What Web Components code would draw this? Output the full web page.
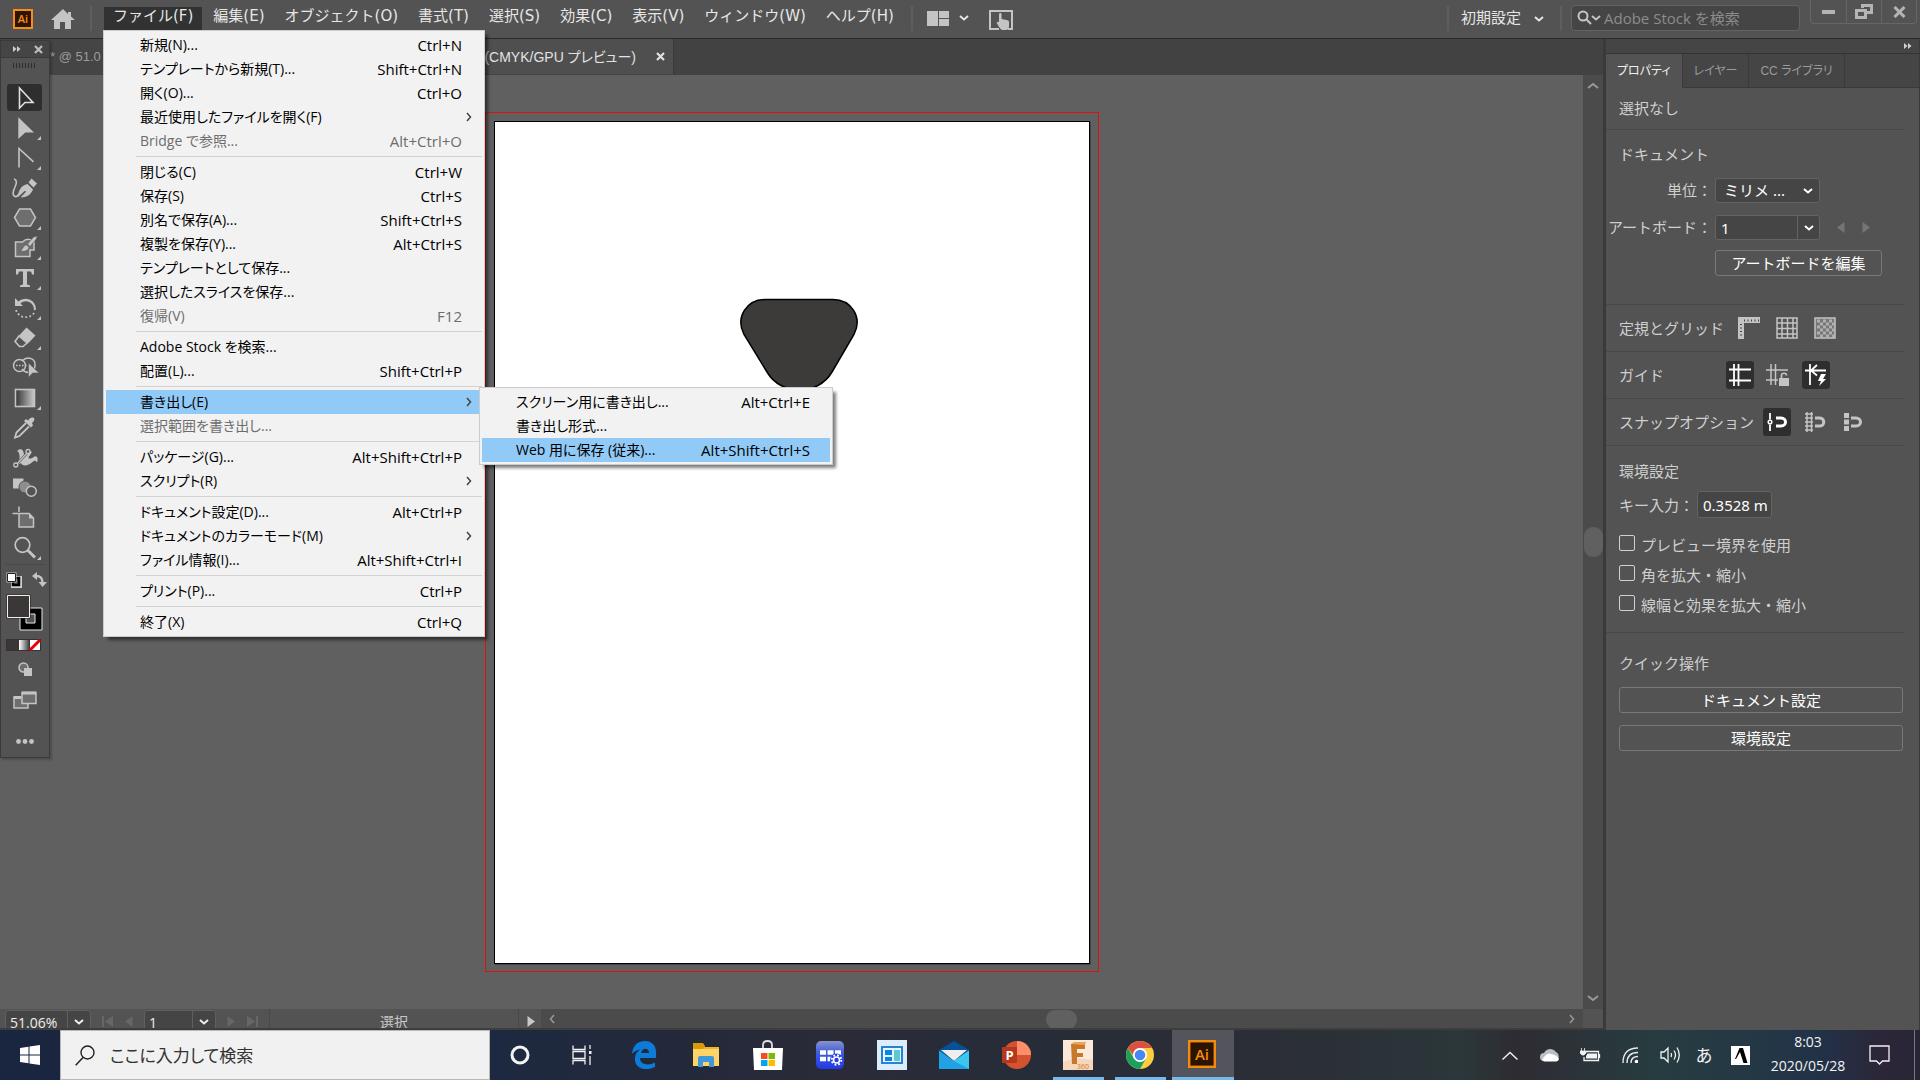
<!DOCTYPE html>
<html lang="ja">
<head>
<meta charset="utf-8">
<title>Illustrator</title>
<style>
  html, body { margin: 0; height: 100%; overflow: hidden; background: #535353; }
  body { font-family: "Open Sans", "Noto Sans CJK JP", sans-serif; font-size: 15px; line-height: 24px; color: #d6d6d6; }
</style>
</head>
<body>
<app-shell></app-shell>

<script>
const RESET = `
  *, *::before, *::after { box-sizing: border-box; }
  button, input, select { font: inherit; color: inherit; margin: 0; padding: 0; border: 0; background: none; border-radius: 0; appearance: none; outline: none; min-width: 0; }
  button { cursor: default; }
  svg { display: block; flex: none; }
`;
function define(name, css, html, setup) {
  const template = document.createElement('template');
  template.innerHTML = `<style>${RESET}${css}</style>${html}`;
  customElements.define(name, class extends HTMLElement {
    connectedCallback() {
      if (this.shadowRoot) return;
      this.attachShadow({ mode: 'open' }).appendChild(template.content.cloneNode(true));
      if (setup) setup(this.shadowRoot, this);
    }
  });
}

/* name: [width, height, svg body] */
const L = '#c4c4c4';
const ICONS = {
  'ai': [20, 20, `<rect x="1" y="1" width="18" height="18" fill="#2b1400" stroke="#f68b1f" stroke-width="2"/><text x="10" y="14" text-anchor="middle" font-family="Open Sans" font-weight="600" font-size="11" fill="#f68b1f">Ai</text>`],
  'home': [24, 20, `<path d="M12 0 0 11h3v9h6v-7h5v7h6v-9h4L20 7.500V3h-3v2z" fill="${L}"/>`],
  'arrange': [22, 15, `<path d="M0 0h11v15H0zM12 0h10v7H12zM12 8h10v7H12z" fill="${L}"/>`],
  'chev': [10, 6, `<path d="m1 1 4 3.500 4-3.500" fill="none" stroke="currentColor" stroke-width="2"/>`],
  'chev-up': [12, 7, `<path d="m1 6 5-4 5 4" fill="none" stroke="currentColor" stroke-width="2"/>`],
  'chev-down': [12, 7, `<path d="m1 1 5 4 5-4" fill="none" stroke="currentColor" stroke-width="2"/>`],
  'chev-left': [6, 10, `<path d="M5 1 1.500 5 5 9" fill="none" stroke="currentColor" stroke-width="1.500"/>`],
  'chev-right': [6, 10, `<path d="M1 1 4.500 5 1 9" fill="none" stroke="currentColor" stroke-width="1.500"/>`],
  'touch': [24, 20, `<path d="M10 19H1V1h22v18h-4" fill="none" stroke="${L}" stroke-width="2"/><path d="M10 4.500c0-2 2.600-2 2.600 0V9l6 1.300c1 .3 1.400 1 1.400 2V16c0 2-1 4-3 4h-3c-2 0-3.500-2-6-6.500-.8-1.600 1-2.400 2-1.300z" fill="${L}"/>`],
  'search-drop': [24, 16, `<circle cx="6" cy="6" r="4.500" fill="none" stroke="${L}" stroke-width="2"/><path d="m9 9 5 5M15 6l4 3.500L23 6" fill="none" stroke="${L}" stroke-width="2"/>`],
  'w-min': [13, 13, `<rect y="5" width="13" height="4" fill="#b4b4b4"/>`],
  'w-restore': [18, 15, `<path d="M1.500 6.500h9v7h-9zM7.500 4V1.500h9v7H12" fill="none" stroke="#b4b4b4" stroke-width="3"/>`],
  'w-close': [13, 12, `<path d="m1.500 1 10 10M11.500 1l-10 10" stroke="#b4b4b4" stroke-width="3"/>`],
  'x': [9, 9, `<path d="m1 1 7 7M8 1 1 8" stroke="currentColor" stroke-width="2.200"/>`],
  'dbl': [8, 6, `<path d="M0 0 3.500 3 0 6zM4 0l3.500 3L4 6z" fill="#d0d0d0"/>`],
  'grip': [24, 5, `<path d="M0 2.500h24" stroke="#2c2c2c" stroke-width="5" stroke-dasharray="1 2"/>`],

  't0': [36, 30, `<path d="M12.500 5v20l5.500-5.500h8z" fill="none" stroke="#e0e0e0" stroke-width="1.600"/>`],
  't1': [36, 30, `<path d="M11.300 4.300V26l7-6.500H27z" fill="${L}"/>`],
  't2': [36, 30, `<path d="M12 24.500V5.500l14.500 13.300" fill="none" stroke="${L}" stroke-width="1.600"/>`],
  't3': [36, 30, `<path d="M7 6c3 1 3 4 1 8s-3 8 0 9.500c2 .6 3-1 4-2.500" fill="none" stroke="${L}" stroke-width="1.600"/><path d="M10.500 24.500c1-7 3.500-12 10-13.500l5.500 5.500c-2 5-6 8-12.500 8l5.500-5.700-1-1z" fill="${L}"/><path d="m21.500 9.500 3-4 5.500 5-3.500 4z" fill="${L}"/>`],
  't4': [36, 30, `<path d="m7.500 14.500 5-8.500h11l5 8.500-5 8.500h-11z" fill="#6e6e6e" stroke="${L}" stroke-width="1.500"/>`],
  't5': [36, 30, `<path d="M8.500 9h7c4-4 9-3 11.500 0v8h-4v6.500H8.500z" fill="#6e6e6e" stroke="${L}" stroke-width="1.500"/><path d="m30.500 3-4 1-6 7 2.500 2.500 6-7zM19.500 12c-3 0-3 3-6 6 4 1 8 0 8.500-4z" fill="${L}" stroke="#535353" stroke-width=".6"/>`],
  't6': [36, 30, `<path d="M9 6h18v5.500h-2L24 8.500h-4v13l3 1V24H13v-1.500l3-1v-13h-4l-1 3H9z" fill="${L}"/>`],
  't7': [36, 30, `<path d="M8 5v8h8l-2.500-2.500c5-5 14-1.500 13.500 7l2-1c0-10-11-14-17.500-8z" fill="${L}"/><path d="M27 20c-4 6-15 6-18-3" fill="none" stroke="${L}" stroke-width="1.800" stroke-dasharray="1.800 2.300"/>`],
  't8': [36, 30, `<path d="m19.500 4.500 9 8-7.500 8-9-8z" fill="${L}"/><path d="m12 13-4 5.500 4.500 5h3.500l4-3.500z" fill="none" stroke="${L}" stroke-width="1.600"/>`],
  't9': [36, 30, `<path d="M15 8c6-6 14-2 13 5-1 8-9 8-13 3" fill="none" stroke="${L}" stroke-width="1.500"/><circle cx="12.500" cy="12.500" r="6" fill="none" stroke="${L}" stroke-width="1.500"/><path d="M9 12.500h12" stroke="${L}" stroke-width="1.500" stroke-dasharray="1.500 1.500"/><path d="M21.500 10v14.500l4-4.500H32z" fill="${L}" stroke="#535353" stroke-width=".6"/>`],
  't10': [36, 30, `<defs><linearGradient id="g"><stop stop-color="#333"/><stop offset="1" stop-color="#ccc"/></linearGradient></defs><rect x="8.500" y="6.500" width="19" height="17" fill="url(#g)" stroke="${L}" stroke-width="1.600"/>`],
  't11': [36, 30, `<path d="m19 10-9.500 9.500-1.500 5 4.500-1.500L22 13.500" fill="none" stroke="${L}" stroke-width="1.800"/><path d="m17 8 2-2 2 1.500C23 5 24 4 26 4.500s2 3-1 5.500l1 2.500-2 2z" fill="${L}"/>`],
  't12': [36, 30, `<path d="M10 8c4-4 7-1 7 4l1 2c3-3 5-7 6.500-5.500 1 1.500-3 4.500-3 6.500 1 1.500 4 0 6-1.500 3-1 4 3 2.500 6-1-2-2-2.500-4-1-5 5-11 5-12 1.500-1 1-3 1-4 .5 2-3 3-5 2.500-8C12 10 12 9 10 8z" fill="${L}"/><path d="m10 21 10-11" stroke="#535353" stroke-width="2.600"/><path d="m9 22 12-13" stroke="${L}" stroke-width="1.300"/><circle cx="8.800" cy="22" r="2" fill="#535353" stroke="${L}" stroke-width="1.300"/><circle cx="21" cy="8.500" r="2" fill="#535353" stroke="${L}" stroke-width="1.300"/>`],
  't13': [36, 30, `<path d="M6 5.500h10.500v10H6z" fill="${L}"/><circle cx="18" cy="14" r="6" fill="#8e8e8e" stroke="#535353"/><circle cx="24.300" cy="18.300" r="5" fill="#535353" stroke="${L}" stroke-width="1.500"/>`],
  't14': [36, 30, `<path d="M12 3.500V9M5.500 10.500H11" stroke="${L}" stroke-width="1.500"/><path d="M12 10.500h10l4.500 4.500v9H12z" fill="#6e6e6e" stroke="${L}" stroke-width="1.500"/><path d="M22 10v5.500h5z" fill="${L}"/>`],
  't15': [36, 30, `<circle cx="15.500" cy="12" r="7.300" fill="none" stroke="${L}" stroke-width="1.700"/><path d="m21 17.500 7 7" stroke="${L}" stroke-width="3"/>`],
  'default-fill': [16, 16, `<path d="M6.500 5.500h8v9h-8z" fill="none" stroke="#d0d0d0" stroke-width="3"/><path d="M7 6h6v7H7z" fill="none" stroke="#000" stroke-width="2.500"/><path d="M.5.500h10v10H.500z" fill="#d0d0d0"/><path d="M1.500 1.500h8v8h-8z" fill="#fff" stroke="#222"/>`],
  'swap': [15, 15, `<path d="M4 4c5 0 6.500 2 6.500 7" fill="none" stroke="${L}" stroke-width="2.500"/><path d="M5 0v8L0 4zM6.500 10H15l-4.500 5z" fill="${L}"/>`],
  'swatches': [37, 37, `<path d="M14 14h22v22H14z" fill="#000" stroke="#e8e8e8"/><path d="M20 20h9v9h-9z" fill="#535353" stroke="#e8e8e8"/><path d="M.5.500h24v24H.500z" fill="#222"/><path d="M1.500 1.500h22v22h-22z" fill="#3b3736" stroke="#f0f0f0"/>`],
  'modes': [35, 12, `<defs><linearGradient id="m"><stop stop-color="#fff"/><stop offset="1" stop-color="#444"/></linearGradient></defs><path d="M0 0h35v12H0z" fill="#333"/><path d="M1 1h11v10H1z" fill="#3b3736"/><path d="M13 1h10v10H13z" fill="url(#m)"/><path d="M24 1h10v10H24z" fill="#fff"/><path d="m24 11 10-10" stroke="#e00" stroke-width="3"/>`],
  'draw': [14, 14, `<circle cx="5.500" cy="5.500" r="4.500" fill="#6e6e6e" stroke="${L}" stroke-width="1.500"/><path d="M6 6h8v8H6z" fill="${L}"/>`],
  'screen': [24, 18, `<path d="M1 6h14v11H1z" fill="#6e6e6e" stroke="${L}" stroke-width="1.500"/><path d="M9 1.500h14v11H9z" fill="#6e6e6e" stroke="${L}" stroke-width="1.500"/><path d="M9 2h14M1 6.500h7" stroke="${L}" stroke-width="3"/>`],
  'dots': [18, 5, `<g fill="${L}"><circle cx="2.500" cy="2.500" r="2.400"/><circle cx="9" cy="2.500" r="2.400"/><circle cx="15.500" cy="2.500" r="2.400"/></g>`],

  'ruler': [22, 22, `<path d="M0 0h22v6H6v16H0z" fill="${L}"/><path d="M6 3.500h15M3 7v14" stroke="#444" stroke-width="2" stroke-dasharray="1 2.500"/>`],
  'grid': [22, 22, `<path d="M1 1h20v20H1zM1 6h20M1 11.500h20M1 17h20M6 1v20M11.500 1v20M17 1v20" fill="none" stroke="${L}" stroke-width="1.500"/>`],
  'checker': [22, 22, `<rect x="1" y="1" width="20" height="20" fill="#777" stroke="${L}" stroke-width="1.500"/><path d="M3 4h16M3 10h16M3 16h16" stroke="#b0b0b0" stroke-width="3" stroke-dasharray="3 3"/><path d="M6 7h14M6 13h14M6 19h14" stroke="#b0b0b0" stroke-width="3" stroke-dasharray="3 3"/>`],
  'guides': [22, 22, `<path d="M5 0v22M9.500 0v22M0 5.500h22M0 16.500h22" stroke="#fff" stroke-width="1.800"/>`],
  'guides-lock': [24, 24, `<path d="M5 1v21M9.500 1v21M0 7h22M0 17h12" stroke="${L}" stroke-width="1.500"/><path d="M13 15h10v8H13z" fill="${L}"/><path d="M15.500 15v-2.500c0-3 5-3 5 0" fill="none" stroke="${L}" stroke-width="1.700"/>`],
  'smart': [22, 22, `<path d="M5 0v21M0 6.500h21M12 1 6 6.500l6 5" fill="none" stroke="#fff" stroke-width="1.800"/><path d="m16 10-3 7h3l-2 5 7-7h-3l3-5z" fill="#fff"/>`],
  'snap-point': [20, 20, `<path d="M3 1v6.500M3 12.500V19" stroke="#fff" stroke-width="1.800"/><circle cx="3" cy="10" r="1.800" fill="none" stroke="#fff" stroke-width="1.500"/><path d="M9 6h5c6 0 6 8 0 8H9" fill="none" stroke="#fff" stroke-width="3"/>`],
  'snap-grid': [21, 20, `<path d="M2 0v20M6.500 0v20M0 2h8M0 6h8M0 10h8M0 14h8M0 18h8" stroke="${L}" stroke-width="1.500"/><path d="M10 6h5c5 0 5 8 0 8h-5" fill="none" stroke="${L}" stroke-width="3"/>`],
  'snap-pixel': [20, 20, `<path d="M1 1h5v5H1zM1 7.500h5v5H1zM1 14h5v5H1z" fill="${L}"/><path d="M8 6h5c6 0 6 8 0 8H8" fill="none" stroke="${L}" stroke-width="3"/>`],
  'tri-left': [8, 11, `<path d="M7.500 0v11L0 5.500z" fill="currentColor"/>`],
  'tri-right': [8, 11, `<path d="M.5 0v11L8 5.500z" fill="currentColor"/>`],
  'first': [11, 11, `<path d="M0 0h2v11H0zM11 0v11L3 5.500z" fill="currentColor"/>`],
  'last': [11, 11, `<path d="M9 0h2v11H9zM0 0v11l8-5.500z" fill="currentColor"/>`],

  'windows': [20, 20, `<path d="M0 3l8.500-1.300V9.500H0zM9.500 1.500 20 0v9.500H9.500zM0 10.500h8.500v7.800L0 17zM9.500 10.500H20V20L9.500 18.500z" fill="#fff"/>`],
  'search': [20, 21, `<circle cx="12.500" cy="7.500" r="6.500" fill="none" stroke="#222" stroke-width="1.400"/><path d="M8 12.500.7 20.300" stroke="#222" stroke-width="1.500"/>`],
  'cortana': [20, 20, `<circle cx="10" cy="10" r="8" fill="none" stroke="#f2f2f2" stroke-width="3"/>`],
  'taskview': [20, 20, `<path d="M1 .5v4h12v-4M1 19.500v-4h12v4M1 6.500h12v7H1zM18 0v4M18 11v9" fill="none" stroke="#f2f2f2" stroke-width="1.300"/><rect x="17" y="6" width="2.500" height="3" fill="#f2f2f2"/>`],
  'edge': [26, 28, `<path d="M1 13C2 3 8 0 14 0c8 0 12 6 11 14v3H9c0 7 9 8 15 4.500V26c-9 4.500-21 2-20-9 .5-5 3-7 5.500-8.500C6 9 3 10.500 1 13zm9-1h8c0-6-7-5.500-8 0z" fill="#0c7cd8"/>`],
  'folder': [28, 24, `<path d="M1 1h10l2 3h14v19H1z" fill="#f0b429"/><path d="M1 0h10l2 3-2 3H1z" fill="#d99a08"/><path d="M1 6h26v17H1z" fill="#ffd466"/><path d="M6 24V15q0-2 2-2h12q2 0 2 2v9h-5v-5h-6v5z" fill="#3f98dc"/>`],
  'store': [30, 30, `<path d="M10 10V5q0-4 4.500-4T19 5v5" fill="none" stroke="#ddd" stroke-width="1.800"/><path d="M0 8h30l-1 22H1z" fill="#fff"/><path d="M8 13h6.500v6H8z" fill="#f25022"/><path d="M15.500 13H22v6h-6.500z" fill="#7fba00"/><path d="M8 20h6.500v6H8z" fill="#00a4ef"/><path d="M15.500 20H22v6h-6.500z" fill="#ffb900"/>`],
  'calgear': [28, 28, `<defs><linearGradient id="c" x2="0" y2="1"><stop stop-color="#8a94c8"/><stop offset=".4" stop-color="#3f5ee0"/><stop offset="1" stop-color="#2238e8"/></linearGradient></defs><rect width="28" height="28" rx="5" fill="url(#c)"/><path d="M4 11.500h21M4 18h12" stroke="#fff" stroke-width="4.500" stroke-dasharray="6 1.500"/><circle cx="20.500" cy="19" r="6.500" fill="#2740e4"/><circle cx="20.500" cy="19" r="3" fill="none" stroke="#fff" stroke-width="1.600"/><circle cx="20.500" cy="19" r="4.800" fill="none" stroke="#fff" stroke-width="2" stroke-dasharray="1.800 1.970"/>`],
  'panes': [30, 30, `<path d="M0 0h30v30H0z" fill="#dcecfc"/><path d="M5 7h20v16H5z" fill="#eaf6ff" stroke="#2582d4" stroke-width="2"/><path d="M8 10h7v5H8zM8 17h7v4H8z" fill="#0b84e8"/><path d="M17 10h6v11h-6z" fill="#5cc8d4"/>`],
  'mail': [30, 28, `<path d="m15 0 15 9v5H0V9z" fill="#07509a"/><path d="M2 9h26L15 20z" fill="#eee"/><path d="M0 9.500 15 20l15-10.500V28H0z" fill="#20a2e4"/><path d="M15 20 30 9.500V28z" fill="#3cc6f2"/>`],
  'ppt': [29, 28, `<circle cx="15" cy="14" r="14" fill="#d35230"/><path d="M15 0a14 14 0 0 1 14 14H15z" fill="#ff8f6b"/><path d="M0 6h15v16H0z" fill="#b7371c"/><text x="7.500" y="18.500" font-family="Open Sans" font-weight="700" font-size="13" text-anchor="middle" fill="#fff">P</text>`],
  'fusion': [30, 30, `<path d="M0 0h30v30H0z" fill="#fbe9dc"/><path d="M0 22q14-6 30-2v10H0z" fill="#f8d6bb"/><path d="M8 4h14v5h-8v4h6v4h-6v7H9z" fill="#c8782a"/><path d="M8 4 11 2h12l-1 3z" fill="#e9a75c"/><text x="20" y="28.500" font-family="Open Sans" font-size="7" text-anchor="middle" fill="#d2792b">360</text>`],
  'chrome': [28, 28, `<circle cx="14" cy="14" r="14" fill="#ffcd40"/><path d="M1.900 7A14 14 0 0 1 26.100 7H14a7 7 0 0 0-6.500 4.500L7 14z" fill="#dc5044"/><path d="M1.900 7A14 14 0 0 0 14 28l6-10.500-6 3.500-6-3.500z" fill="#1a9f5d"/><circle cx="14" cy="14" r="7" fill="#fff"/><circle cx="14" cy="14" r="5.300" fill="#4687f0"/>`],
  'ai-task': [28, 28, `<rect x="1.200" y="1.200" width="25.600" height="25.600" fill="#2b1400" stroke="#f58a0f" stroke-width="2.400"/><text x="14" y="19.500" text-anchor="middle" font-family="Open Sans" font-weight="600" font-size="15" fill="#f58a0f">Ai</text>`],
  'tray-up': [16, 9, `<path d="m.5 8.500 7.500-7 7.500 7" fill="none" stroke="#f2f2f2" stroke-width="1.400"/>`],
  'cloud': [20, 14, `<path d="M4 13a4 4 0 0 1 0-8A7 7 0 0 1 16 4a5 5 0 0 1 0 9z" fill="#b9c0c4"/><path d="M2 12q5-8 9-6 6 1 8 5-1 2.500-3 2.500H4z" fill="#fff"/>`],
  'battery': [21, 14, `<path d="M6 3.500h12.500v9H4V9M19.500 6v4" fill="none" stroke="#f2f2f2" stroke-width="1.300"/><path d="M7.500 5.500H17v5H6V8z" fill="#f2f2f2"/><path d="M1.500 0v3M4.500 0v3M0 3h6v2L4 7H2L0 5z" fill="#f2f2f2" stroke="#f2f2f2" stroke-width=".8"/>`],
  'wifi': [16, 16, `<path d="M1 16Q1 1 16 1M5 16Q5 5.500 16 5.500M9 16q0-6.500 7-6.500" fill="none" stroke="#e8e8e8" stroke-width="1.400"/><circle cx="14.500" cy="14.500" r="1.800" fill="#fff"/>`],
  'sound': [21, 18, `<path d="M1 6h3l4-4v14l-4-4H1z" fill="none" stroke="#f2f2f2" stroke-width="1.300"/><path d="M11 7q1 2 0 4M14 4.500q3 4.500 0 9M17 1.500q4.500 7.500 0 15" fill="none" stroke="#f2f2f2" stroke-width="1.300"/>`],
  'atok': [19, 19, `<path d="M0 0h19v19H0z" fill="#fff"/><path d="M8.500 2h3.500l4.500 15h-4L9 6 5 13H4z" fill="#000"/>`],
  'note': [21, 20, `<path d="M1 1h19v15h-6.500L10.500 19l-3-3H1z" fill="none" stroke="#f2f2f2" stroke-width="1.300"/>`]
};
customElements.define('ui-icon', class extends HTMLElement {
  connectedCallback() {
    if (this.shadowRoot) return;
    const [w, h, body] = ICONS[this.getAttribute('name')];
    this.attachShadow({ mode: 'open' }).innerHTML =
      `<style>:host{display:block;flex:none}svg{display:block}</style><svg aria-hidden="true" width="${w}" height="${h}" viewBox="0 0 ${w} ${h}">${body}</svg>`;
  }
});

/* ---------- popup menus ---------- */
define('menu-row', `
  :host { display: block; padding: 0 2px; color: #000; }
  button { display: flex; width: 100%; height: 24px; align-items: center; padding: 0 20px 0 34px; text-align: left; white-space: nowrap; position: relative; }
  .label { flex: 1; font-size: 14px; font-feature-settings: "palt"; }
  :host([disabled]) { color: #6d6d6d; }
  :host([active]) button { background: #91c9f7; }
  ui-icon { display: none; position: absolute; right: 10px; color: #444; }
  :host([more]) ui-icon { display: block; }
`, `<button role="menuitem"><span class="label"><slot></slot></span><span class="key"></span><ui-icon name="chev-right"></ui-icon></button>`,
(root, host) => {
  root.querySelector('.key').textContent = host.getAttribute('key') || '';
});
define('menu-line', `:host { display: block; height: 7px; padding: 3px 2px 3px 32px; } i { display: block; height: 1px; background: #d2d2d2; }`, `<i></i>`);
define('menu-popup', `
  :host { display: block; background: #f2f2f2; border: 1px solid #ccc; padding: 2px 0; box-shadow: 4px 4px 3px -1px rgba(0,0,0,.5); }
`, `<slot></slot>`);
define('file-menu', `
  :host { display: block; }
  .main { width: 382px; }
  .sub { position: absolute; left: 376px; top: 357px; width: 354px; }
`, `
  <menu-popup class="main" role="menu">
    <menu-row key="Ctrl+N">新規(N)...</menu-row>
    <menu-row key="Shift+Ctrl+N">テンプレートから新規(T)...</menu-row>
    <menu-row key="Ctrl+O">開く(O)...</menu-row>
    <menu-row more>最近使用したファイルを開く(F)</menu-row>
    <menu-row disabled key="Alt+Ctrl+O">Bridge で参照...</menu-row>
    <menu-line></menu-line>
    <menu-row key="Ctrl+W">閉じる(C)</menu-row>
    <menu-row key="Ctrl+S">保存(S)</menu-row>
    <menu-row key="Shift+Ctrl+S">別名で保存(A)...</menu-row>
    <menu-row key="Alt+Ctrl+S">複製を保存(Y)...</menu-row>
    <menu-row>テンプレートとして保存...</menu-row>
    <menu-row>選択したスライスを保存...</menu-row>
    <menu-row disabled key="F12">復帰(V)</menu-row>
    <menu-line></menu-line>
    <menu-row>Adobe Stock を検索...</menu-row>
    <menu-row key="Shift+Ctrl+P">配置(L)...</menu-row>
    <menu-line></menu-line>
    <menu-row active more>書き出し(E)</menu-row>
    <menu-row disabled>選択範囲を書き出し...</menu-row>
    <menu-line></menu-line>
    <menu-row key="Alt+Shift+Ctrl+P">パッケージ(G)...</menu-row>
    <menu-row more>スクリプト(R)</menu-row>
    <menu-line></menu-line>
    <menu-row key="Alt+Ctrl+P">ドキュメント設定(D)...</menu-row>
    <menu-row more>ドキュメントのカラーモード(M)</menu-row>
    <menu-row key="Alt+Shift+Ctrl+I">ファイル情報(I)...</menu-row>
    <menu-line></menu-line>
    <menu-row key="Ctrl+P">プリント(P)...</menu-row>
    <menu-line></menu-line>
    <menu-row key="Ctrl+Q">終了(X)</menu-row>
  </menu-popup>
  <menu-popup class="sub" role="menu">
    <menu-row key="Alt+Ctrl+E">スクリーン用に書き出し...</menu-row>
    <menu-row>書き出し形式...</menu-row>
    <menu-row active key="Alt+Shift+Ctrl+S">Web 用に保存 (従来)...</menu-row>
  </menu-popup>`);

/* ---------- menu bar ---------- */
define('menu-bar', `
  :host { display: flex; height: 39px; flex: none; align-items: flex-start; background: #535353; border-bottom: 1px solid #2a2a2a; color: #e6e6e6; white-space: nowrap; }
  .brand { display: flex; align-items: center; gap: 18px; height: 38px; padding-left: 13px; }
  .bar { width: 2px; height: 25px; margin-top: 6px; background: #5e5e5e; flex: none; }
  .brand + .bar { margin-left: 15px; margin-right: 12px; }
  nav { display: flex; gap: 2px; font-family: "DejaVu Sans", "Noto Sans CJK JP", sans-serif; }
  nav button { height: 30px; padding: 2px 9px 0; line-height: 28px; }
  nav .open { background: linear-gradient(transparent 7px, #323232 7px); }
  nav + .bar { margin-left: 8px; }
  .tools { display: flex; align-items: center; height: 36px; gap: 10px; padding-left: 14px; }
  .tools .touch { margin-left: 10px; padding-top: 4px; }
  .space { flex: 1; }
  .preset { display: flex; align-items: center; gap: 13px; height: 34px; padding: 0 16px 0 12px; }
  .preset ui-icon { padding-top: 4px; }
  label { display: flex; align-items: center; gap: 3px; width: 229px; height: 26px; margin: 5px 10px 0 9px; padding-left: 5px; background: #454545; border: 1px solid #636363; border-radius: 4px; }
  input { flex: 1; height: 24px; width: 0; }
  input::placeholder { color: #8c8c8c; opacity: 1; }
  .win { display: flex; height: 24px; margin-right: 3px; border: 1px solid #666; border-top: 0; border-radius: 0 0 4px 4px; }
  .win button { width: 35px; display: grid; place-items: center; }
  .win button + button { border-left: 1px solid #666; }
`, `
  <div class="brand"><ui-icon name="ai"></ui-icon><ui-icon name="home"></ui-icon></div>
  <div class="bar"></div>
  <nav><button class="open">ファイル(F)</button><button>編集(E)</button><button>オブジェクト(O)</button><button>書式(T)</button><button>選択(S)</button><button>効果(C)</button><button>表示(V)</button><button>ウィンドウ(W)</button><button>ヘルプ(H)</button></nav>
  <div class="bar"></div>
  <div class="tools"><ui-icon name="arrange"></ui-icon><ui-icon name="chev"></ui-icon><ui-icon class="touch" name="touch"></ui-icon></div>
  <div class="space"></div>
  <div class="bar"></div>
  <button class="preset">初期設定<ui-icon name="chev"></ui-icon></button>
  <div class="bar"></div>
  <label><ui-icon name="search-drop"></ui-icon><input aria-label="Adobe Stock を検索" placeholder="Adobe Stock を検索"></label>
  <div class="win"><button aria-label="最小化"><ui-icon name="w-min"></ui-icon></button><button aria-label="元に戻す"><ui-icon name="w-restore"></ui-icon></button><button aria-label="閉じる"><ui-icon name="w-close"></ui-icon></button></div>
`);

/* ---------- tools ---------- */
define('tool-box', `
  :host { display: block; width: 50px; background: #535353; border: 1px solid #3a3a3a; box-shadow: 2px 2px 2px rgba(0,0,0,.2); box-sizing: border-box; }
  .head { display: flex; justify-content: space-between; align-items: center; height: 17px; padding: 0 6px 0 12px; background: #454545; border-bottom: 1px solid #3a3a3a; color: #bdbdbd; }
  .grip { display: grid; justify-items: center; padding-top: 5px; height: 25px; }
  .tool { display: block; width: 36px; height: 30px; margin-left: 6px; position: relative; }
  .tool.on::before { content: ""; position: absolute; inset: 1px 1px 2px 0; background: #2e2e2e; border-radius: 3px; }
  .tool ui-icon { position: relative; }
  .tool.more::after { content: ""; position: absolute; right: 2px; bottom: 3px; border: 2px solid #c4c4c4; border-left-color: transparent; border-top-color: transparent; }
  hr { border: 0; border-top: 1px solid #484848; margin: 1px 5px 7px; }
  .pair { display: flex; justify-content: space-between; padding: 0 2px 0 5px; height: 22px; }
  .stack { display: flex; flex-direction: column; padding-left: 5px; gap: 8px; align-items: flex-start; }
  .mid { display: flex; flex-direction: column; align-items: center; padding: 11px 0 13px; gap: 15px; }
  .dots { padding-top: 15px; }
`, `
  <div class="head"><ui-icon name="dbl"></ui-icon><ui-icon name="x"></ui-icon></div>
  <div class="grip"><ui-icon name="grip"></ui-icon></div>
  <div class="list"></div>
  <hr>
  <div class="pair"><ui-icon name="default-fill"></ui-icon><ui-icon name="swap"></ui-icon></div>
  <div class="stack"><ui-icon name="swatches"></ui-icon><ui-icon name="modes"></ui-icon></div>
  <div class="mid"><ui-icon name="draw"></ui-icon><ui-icon name="screen"></ui-icon><ui-icon class="dots" name="dots"></ui-icon></div>
`, root => {
  const names = ['選択', 'ダイレクト選択', 'アンカーポイント', '曲線', '多角形', 'ブラシ', '文字', '回転', '消しゴム', 'シェイプ形成', 'グラデーション', 'スポイト', 'パペットワープ', 'ブレンド', 'アートボード', 'ズーム'];
  const more = [1, 2, 4, 5, 6, 7, 8, 10, 15];
  root.querySelector('.list').innerHTML = names.map((n, i) =>
    `<button class="tool ${i ? '' : 'on'} ${more.includes(i) ? 'more' : ''}" aria-label="${n}"><ui-icon name="t${i}"></ui-icon></button>`).join('');
});

/* ---------- document area ---------- */
define('doc-tabs', `
  :host { display: flex; height: 36px; flex: none; background: #424242; font: 14px/36px "Liberation Sans", "Noto Sans CJK JP", sans-serif; font-feature-settings: "palt"; white-space: nowrap; }
  .tab { display: flex; align-items: center; height: 36px; }
  .back { flex: 0 0 103px; justify-content: flex-start; padding-left: 50px; background: #454545; color: #9c9c9c; font-size: 13px; }
  .front { flex: 0 0 571px; justify-content: flex-end; gap: 20px; padding: 0 8px 0 0; background: #4f4f4f; color: #e2e2e2; border-right: 1px solid #3a3a3a; border-bottom: 1px solid #444; }
`, `<button class="tab back">* @ 51.0</button><button class="tab front"><span>(CMYK/GPU プレビュー)</span><ui-icon name="x"></ui-icon></button>`);

define('art-canvas', `
  :host { display: block; position: relative; flex: 1; overflow: hidden; background: #606060; }
  .bleed, .board, svg { position: absolute; }
  .bleed { left: 485px; top: 37px; width: 614px; height: 860px; border: 1px solid #e01010; }
  .board { left: 494px; top: 46px; width: 596px; height: 843px; background: #fff; border: 1px solid #000; box-shadow: 1px 1px 0 #444; }
  svg { left: 739px; top: 223px; }
`, `
  <div class="bleed"></div><div class="board"></div>
  <svg width="120" height="96" viewBox="0 0 120 96"><path d="M26 1.500H94C112 1.500 124 19 115 36.500L93 74C79 98 42 98 28 74L5 36.500C-4 19 8 1.500 26 1.500Z" fill="#3d3b39" stroke="#000" stroke-width="1.500"/></svg>
`);
define('v-scroll', `
  :host { display: flex; flex-direction: column; align-items: center; justify-content: space-between; width: 20px; flex: none; padding: 7px 0; background: #4b4b4b; color: #999; box-sizing: border-box; }
  i { width: 19px; height: 30px; border-radius: 9px; background: #606060; }
`, `<ui-icon name="chev-up"></ui-icon><i></i><ui-icon name="chev-down"></ui-icon>`);

define('status-bar', `
  :host { display: flex; flex: none; height: 21px; overflow: hidden; background: #535353; border-bottom: 2px solid #3d3d3d; color: #666; font-size: 14px; box-sizing: border-box; }
  .box { display: flex; height: 27px; margin-top: 1px; flex: none; border: 1px solid #606060; border-radius: 3px; background: #454545; color: #eee; }
  .box input { padding-left: 4px; height: 23px; line-height: 23px; }
  .box button { width: 23px; height: 22px; display: grid; place-items: center; border-left: 1px solid #606060; }
  .zoom { margin-left: 5px; } .zoom input { width: 61px; }
  .page input { width: 47px; }
  .nav { display: flex; gap: 12px; padding: 7px 11px 0; }
  .mode { width: 250px; border: 1px solid #484848; border-width: 0 1px; text-align: center; line-height: 25px; color: #c8c8c8; }
  .play { padding: 7px 6px 0 8px; color: #c8c8c8; }
  .scroll { display: flex; flex: 1; justify-content: space-between; padding: 0 8px; background: #4b4b4b; color: #999; }
  .scroll ui-icon { padding-top: 5px; }
  .scroll i { width: 31px; height: 19px; border-radius: 9px; background: #606060; margin-top: 1px; }
  .scroll .a { flex: 491; } .scroll .b { flex: 493; }
  .corner { width: 20px; }
`, `
  <div class="box zoom"><input aria-label="ズーム" value="51.06%"><button aria-label="ズームの一覧"><ui-icon name="chev"></ui-icon></button></div>
  <div class="nav"><ui-icon name="first"></ui-icon><ui-icon name="tri-left"></ui-icon></div>
  <div class="box page"><input aria-label="アートボード番号" value="1"><button aria-label="アートボードの一覧"><ui-icon name="chev"></ui-icon></button></div>
  <div class="nav"><ui-icon name="tri-right"></ui-icon><ui-icon name="last"></ui-icon></div>
  <div class="mode">選択</div>
  <div class="play"><ui-icon name="tri-right"></ui-icon></div>
  <div class="scroll"><ui-icon name="chev-left"></ui-icon><span class="a"></span><i></i><span class="b"></span><ui-icon name="chev-right"></ui-icon></div>
  <div class="corner"></div>
`);

/* ---------- properties panel ---------- */
define('panel-section', `
  :host { display: block; border-bottom: 1px solid #484848; margin-right: 15px; padding-left: 13px; }
  :host([last]) { border: 0; }
`, `<slot></slot>`);
define('prop-panel', `
  :host { display: block; width: 317px; flex: none; background: #535353; border-left: 3px solid #3a3a3a; border-right: 1px solid #3a3a3a; box-sizing: border-box; color: #cfcfcf; font-family: "Noto Sans", "Noto Sans CJK JP", sans-serif; white-space: nowrap; }
  .head { display: flex; align-items: center; justify-content: flex-end; height: 15px; padding-right: 7px; background: #454545; border-bottom: 1px solid #333; }
  .tabs { display: flex; height: 34px; background: #454545; font: 12px/32px "Liberation Sans", "Noto Sans CJK JP", sans-serif; font-feature-settings: "palt"; }
  .tabs button { padding: 0 11px; border: solid #3a3a3a; border-width: 0 1px 1px 0; color: #9a9a9a; }
  .tabs .on { background: #535353; color: #f0f0f0; border-bottom-color: #535353; }
  .tabs i { flex: 1; border-bottom: 1px solid #3a3a3a; }
  .sel { padding: 8px 0 9px; }
  .doc { padding: 12px 0 28px; }
  .form { display: grid; grid-template-columns: 106px auto; margin: 12px 0 0 -13px; row-gap: 12px; column-gap: 3px; align-items: center; }
  .form > label { display: flex; justify-content: flex-end; line-height: 25px; }
  .select { display: grid; width: 105px; height: 25px; align-items: center; background: #454545; border: 1px solid #636363; border-radius: 3px; color: #fff; }
  .select select, .select ui-icon { grid-area: 1 / 1; }
  .select select { padding-left: 8px; height: 23px; line-height: 23px; }
  .select ui-icon { justify-self: end; margin-right: 6px; pointer-events: none; }
  .combo { display: flex; align-items: center; }
  .combo .box { display: flex; width: 105px; height: 25px; background: #454545; border: 1px solid #636363; border-radius: 3px; color: #fff; }
  .combo input { width: 81px; padding-left: 5px; }
  .combo .box button { flex: 1; display: grid; place-items: center; border-left: 1px solid #636363; }
  .combo > ui-icon { margin-left: 17px; color: #757575; }
  .btn { display: block; height: 26px; border: 1px solid #787878; border-radius: 3px; color: #fff; line-height: 24px; }
  .edit { width: 167px; margin: 10px 0 0 96px; }
  .icons { display: flex; height: 46px; align-items: center; }
  .icons span { flex: 1; }
  .icons div { display: flex; align-items: center; }
  .ib { width: 28px; height: 28px; display: grid; place-items: center; margin-right: 10px; }
  .ib.on { background: #2e2e2e; border-radius: 3px; }
  .r1 { padding-right: 55px; } .r2 { padding-right: 64px; } .r3 { padding-right: 27px; }
  .pref { padding: 13px 0 12px; }
  .key { display: flex; align-items: center; margin: 8px 0 12px; height: 27px; gap: 3px; }
  .key input { width: 75px; height: 27px; padding: 0 4px 0 5px; background: #454545; border: 1px solid #636363; border-radius: 3px; color: #fff; }
  .check { display: flex; align-items: center; height: 30px; gap: 6px; }
  .check input { width: 16px; height: 16px; border: 1px solid #d0d0d0; border-radius: 2px; margin-top: -4px; }
  .quick { padding-top: 18px; }
  .quick .btn { width: 284px; margin-top: 12px; }
`, `
  <div class="head"><ui-icon name="dbl"></ui-icon></div>
  <div class="tabs"><button class="on">プロパティ</button><button>レイヤー</button><button>CC ライブラリ</button><i></i></div>
  <panel-section><div class="sel">選択なし</div></panel-section>
  <panel-section><div class="doc"><div>ドキュメント</div>
    <div class="form">
      <label for="unit">単位：</label>
      <div class="select"><select id="unit"><option>ミリメ ...</option></select><ui-icon name="chev"></ui-icon></div>
      <label for="board">アートボード：</label>
      <div class="combo"><div class="box"><input id="board" value="1"><button aria-label="一覧"><ui-icon name="chev"></ui-icon></button></div><ui-icon name="tri-left"></ui-icon><ui-icon name="tri-right"></ui-icon></div>
    </div>
    <button class="btn edit">アートボードを編集</button></div></panel-section>
  <panel-section><div class="icons"><span>定規とグリッド</span><div class="r1"><button class="ib" aria-label="定規"><ui-icon name="ruler"></ui-icon></button><button class="ib" aria-label="グリッド"><ui-icon name="grid"></ui-icon></button><button class="ib" aria-label="透明グリッド"><ui-icon name="checker"></ui-icon></button></div></div></panel-section>
  <panel-section><div class="icons"><span>ガイド</span><div class="r2"><button class="ib on" aria-label="ガイドを表示"><ui-icon name="guides"></ui-icon></button><button class="ib" aria-label="ガイドをロック"><ui-icon name="guides-lock"></ui-icon></button><button class="ib on" aria-label="スマートガイド"><ui-icon name="smart"></ui-icon></button></div></div></panel-section>
  <panel-section><div class="icons"><span>スナップオプション</span><div class="r3"><button class="ib on" aria-label="ポイントにスナップ"><ui-icon name="snap-point"></ui-icon></button><button class="ib" aria-label="グリッドにスナップ"><ui-icon name="snap-grid"></ui-icon></button><button class="ib" aria-label="ピクセルにスナップ"><ui-icon name="snap-pixel"></ui-icon></button></div></div></panel-section>
  <panel-section><div class="pref"><div>環境設定</div>
    <div class="key"><label for="inc">キー入力：</label><input id="inc" value="0.3528 mm"></div>
    <label class="check"><input type="checkbox">プレビュー境界を使用</label>
    <label class="check"><input type="checkbox">角を拡大・縮小</label>
    <label class="check"><input type="checkbox">線幅と効果を拡大・縮小</label></div></panel-section>
  <panel-section last><div class="quick"><div>クイック操作</div><button class="btn">ドキュメント設定</button><button class="btn">環境設定</button></div></panel-section>
`);

/* ---------- taskbar ---------- */
define('task-bar', `
  :host { display: flex; height: 50px; flex: none; align-items: stretch; color: #f4f4f4; background: linear-gradient(90deg, #1a2540 0%, #1d2940 26%, #24293a 36%, #2b2b38 44%, #262d38 53%, #2b2d36 63%, #2b2f36 68%, #2b373a 76%, #2e2c33 79%, #273c40 86%, #243746 92%, #223148 95%, #2c2638 98%, #282636 100%); }
  .start { width: 60px; display: grid; place-items: center; }
  label { display: flex; align-items: center; gap: 15px; width: 430px; padding-left: 14px; background: #f1f1f1; border: 1px solid #b8b8b8; color: #333; font: 17px/24px "Noto Sans CJK JP", sans-serif; font-feature-settings: "palt"; }
  label input { flex: 1; height: 40px; padding-bottom: 2px; }
  label input::placeholder { color: #333; opacity: 1; }
  .apps { display: flex; }
  .apps button { width: 62px; display: grid; place-items: center; position: relative; padding-right: 2px; }
  .apps .run::after { content: ""; position: absolute; left: 5px; right: 6px; bottom: 0; height: 3px; background: #76b9ed; }
  .apps .now { background: #53545c; padding-bottom: 2px; }
  .apps .now::after { left: 0; right: 0; }
  .space { flex: 1; }
  .tray { display: flex; align-items: center; }
  .tray > * { width: 40px; display: grid; place-items: center; }
  .tray .ime { width: 28px; font: 17px/24px "Noto Sans CJK JP", sans-serif; }
  .tray .atok { width: 44px; }
  .clock { width: 92px; text-align: center; font-size: 14px; line-height: 24px; }
  .note { width: 50px; margin-right: 10px; display: grid; place-items: center; }
  .peek { width: 6px; border-left: 1px solid #777; }
`, `
  <button class="start" aria-label="スタート"><ui-icon name="windows"></ui-icon></button>
  <label><ui-icon name="search"></ui-icon><input aria-label="検索" placeholder="ここに入力して検索"></label>
  <div class="apps"></div>
  <div class="space"></div>
  <div class="tray"><ui-icon name="tray-up"></ui-icon><ui-icon name="cloud"></ui-icon><ui-icon name="battery"></ui-icon><ui-icon name="wifi"></ui-icon><ui-icon name="sound"></ui-icon><span class="ime">あ</span><ui-icon class="atok" name="atok"></ui-icon></div>
  <div class="clock">8:03<br>2020/05/28</div>
  <button class="note" aria-label="通知"><ui-icon name="note"></ui-icon></button>
  <div class="peek"></div>
`, root => {
  const run = { fusion: 'run', chrome: 'run', 'ai-task': 'run now' };
  root.querySelector('.apps').innerHTML = ['cortana', 'taskview', 'edge', 'folder', 'store', 'calgear', 'panes', 'mail', 'ppt', 'fusion', 'chrome', 'ai-task']
    .map(n => `<button class="${run[n] || ''}" aria-label="${n}"><ui-icon name="${n}"></ui-icon></button>`).join('');
});

define('app-shell', `
  :host { display: flex; flex-direction: column; height: 100vh; position: relative; }
  main { display: flex; flex: 1; min-height: 0; }
  .work { display: flex; flex-direction: column; flex: 1; min-width: 0; }
  .view { display: flex; flex: 1; min-height: 0; }
  tool-box { position: absolute; left: 0; top: 40px; }
  file-menu { position: absolute; left: 103px; top: 30px; }
`, `
  <menu-bar></menu-bar>
  <main>
    <div class="work"><doc-tabs></doc-tabs><div class="view"><art-canvas></art-canvas><v-scroll></v-scroll></div><status-bar></status-bar></div>
    <prop-panel></prop-panel>
  </main>
  <task-bar></task-bar>
  <tool-box></tool-box>
  <file-menu></file-menu>
`);
</script>
</body>
</html>
